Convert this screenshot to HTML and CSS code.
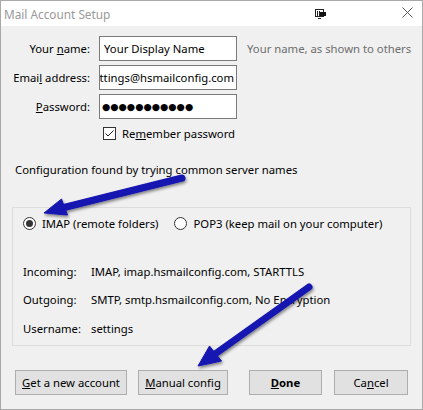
FILE: index.html
```html
<!DOCTYPE html>
<html lang="en">
<head>
    <meta charset="UTF-8">
    <meta name="viewport" content="width=device-width, initial-scale=1.0">
    <title>Mail Account Setup</title>
    <link rel="stylesheet" href="styles.css">
</head>
<body>
    <div class="window">
        <div class="titlebar">
            <span class="title">Mail Account Setup</span>
            <svg class="snap-icon" width="12" height="11" viewBox="0 0 12 11">
                <rect x="0.5" y="0.5" width="8" height="7" fill="#fff" stroke="#222"/>
                <line x1="2.5" y1="2" x2="2.5" y2="7" stroke="#222"/>
                <line x1="4.5" y1="2" x2="4.5" y2="7" stroke="#222"/>
                <rect x="5" y="3" width="6" height="4" fill="#111"/>
                <line x1="3" y1="9.5" x2="6" y2="9.5" stroke="#222"/>
            </svg>
            <svg class="close-icon" width="11" height="11" viewBox="0 0 11 11">
                <path d="M0.5 0.5 L10.5 10.5 M10.5 0.5 L0.5 10.5" stroke="#555" stroke-width="1"/>
            </svg>
        </div>

        <div class="content">
            <div class="account">
                <label class="label">Your <u>n</u>ame:</label>
                <div class="field">Your Display Name</div>
                <span class="hint">Your name, as shown to others</span>

                <label class="label">Emai<u>l</u> address:</label>
                <div class="field field-scrolled"><span>settings@hsmailconfig.com</span></div>
                <span></span>

                <label class="label"><u>P</u>assword:</label>
                <div class="field field-password">●●●●●●●●●●●</div>
                <span></span>

                <span></span>
                <div class="remember">
                    <span class="checkbox">
                        <svg width="11" height="11" viewBox="0 0 11 11">
                            <path d="M1.5 5.5 L4 8 L9.5 2.5" fill="none" stroke="#222" stroke-width="1"/>
                        </svg>
                    </span>
                    <span>Re<u>m</u>ember password</span>
                </div>
            </div>

            <p class="status">Configuration found by trying common server names</p>

            <div class="config">
                <div class="protocols">
                    <div class="option">
                        <span class="radio checked"></span>
                        <span>IMAP (remote folders)</span>
                    </div>
                    <div class="option">
                        <span class="radio"></span>
                        <span>POP3 (keep mail on your computer)</span>
                    </div>
                </div>
                <div class="servers">
                    <span class="server-label">Incoming:</span>
                    <span>IMAP, imap.hsmailconfig.com, STARTTLS</span>
                    <span class="server-label">Outgoing:</span>
                    <span>SMTP, smtp.hsmailconfig.com, No Encryption</span>
                    <span class="server-label">Username:</span>
                    <span>settings</span>
                </div>
            </div>

            <div class="buttons">
                <button class="btn btn-new"><u>G</u>et a new account</button>
                <button class="btn btn-manual"><u>M</u>anual config</button>
                <button class="btn btn-done"><b><u>D</u>one</b></button>
                <button class="btn btn-cancel">Ca<u>n</u>cel</button>
            </div>
        </div>

        <svg class="arrows" width="423" height="410" viewBox="0 0 423 410">
            <defs>
                <filter id="shade" x="-20%" y="-20%" width="140%" height="140%">
                    <feDropShadow dx="1" dy="2" stdDeviation="1.6" flood-color="#000" flood-opacity="0.45"/>
                </filter>
            </defs>
            <g fill="#1414b0" stroke="#1414b0" filter="url(#shade)">
                <line x1="182" y1="178" x2="64" y2="207.5" stroke-width="7" stroke-linecap="round"/>
                <polygon points="44,213 61.5,199 67.5,215" stroke-width="1"/>
                <line x1="309" y1="287" x2="215" y2="354" stroke-width="7" stroke-linecap="round"/>
                <polygon points="198,366 209.5,346 221.5,361" stroke-width="1"/>
            </g>
        </svg>
    </div>
</body>
</html>
```

FILE: styles.css
```css
body {
    margin: 0;
    padding: 0;
    font-family: "Noto Sans", "Open Sans", sans-serif;
    font-size: 11.3px;
    color: #000;
}
.window {
    position: relative;
    width: 423px;
    height: 410px;
    box-sizing: border-box;
    border: 1px solid #a9a9a9;
    background-color: #f0f0f0;
    overflow: hidden;
}
.titlebar {
    height: 25px;
    background-color: #fff;
    display: flex;
    align-items: center;
}
.title {
    margin-left: 3px;
    font-size: 11.8px;
    color: #999;
    flex: 1;
}
.snap-icon {
    margin-right: 75px;
    margin-top: 2px;
}
.close-icon {
    margin-right: 9px;
    margin-top: -2px;
}
.content {
    padding: 10px 0 0 0;
}
.account {
    display: grid;
    grid-template-columns: 89px 138px 1fr;
    grid-auto-rows: 25px;
    column-gap: 9px;
    row-gap: 4px;
    align-items: center;
}
.label {
    text-align: right;
}
.field {
    height: 25px;
    box-sizing: border-box;
    border: 1px solid #7a7a7a;
    background-color: #fff;
    padding: 0 4px;
    display: flex;
    align-items: center;
    white-space: nowrap;
    overflow: hidden;
}
.field-scrolled {
    justify-content: flex-end;
    padding: 0 2px 0 0;
}
.field-password {
    font-family: "DejaVu Sans", sans-serif;
    font-size: 9.5px;
    letter-spacing: 0;
    padding-left: 2px;
}
.hint {
    color: #6d6d6d;
    margin-left: 1px;
}
.remember {
    grid-column: 2 / 4;
    display: flex;
    align-items: center;
    white-space: nowrap;
    margin-left: 4px;
    margin-top: -4px;
}
.checkbox {
    width: 13px;
    height: 13px;
    box-sizing: border-box;
    border: 1px solid #333;
    background-color: #fff;
    margin-right: 6px;
}
.checkbox svg {
    display: block;
}
.status {
    margin: 14px 0 0 14px;
    line-height: 16px;
}
.config {
    margin: 29px 11px 0 11px;
    height: 139px;
    box-sizing: border-box;
    border: 1px solid #dcdcdc;
    padding: 7px 0 0 10px;
}
.protocols {
    display: flex;
    height: 17px;
    align-items: center;
}
.option {
    display: flex;
    align-items: center;
    margin-right: 16px;
}
.radio {
    width: 13px;
    height: 13px;
    box-sizing: border-box;
    border: 1px solid #333;
    border-radius: 50%;
    background-color: #fff;
    margin-right: 6px;
    display: flex;
    align-items: center;
    justify-content: center;
}
.radio.checked::after {
    content: "";
    width: 7px;
    height: 7px;
    border-radius: 50%;
    background-color: #333;
}
.servers {
    display: grid;
    grid-template-columns: 68px 1fr;
    grid-auto-rows: 16px;
    row-gap: 12.5px;
    margin-top: 31px;
    align-items: center;
}
.buttons {
    display: flex;
    margin: 24px 0 0 14px;
}
.btn {
    height: 25px;
    box-sizing: border-box;
    border: 1px solid #adadad;
    background-color: #e1e1e1;
    font-family: inherit;
    font-size: 11.3px;
    color: #000;
    padding: 0;
}
.btn-new {
    width: 112px;
}
.btn-manual {
    width: 90px;
    margin-left: 11px;
}
.btn-done {
    width: 73px;
    margin-left: 21px;
}
.btn-cancel {
    width: 74px;
    margin-left: 12px;
}
.arrows {
    position: absolute;
    left: -1px;
    top: -1px;
    pointer-events: none;
}
```
